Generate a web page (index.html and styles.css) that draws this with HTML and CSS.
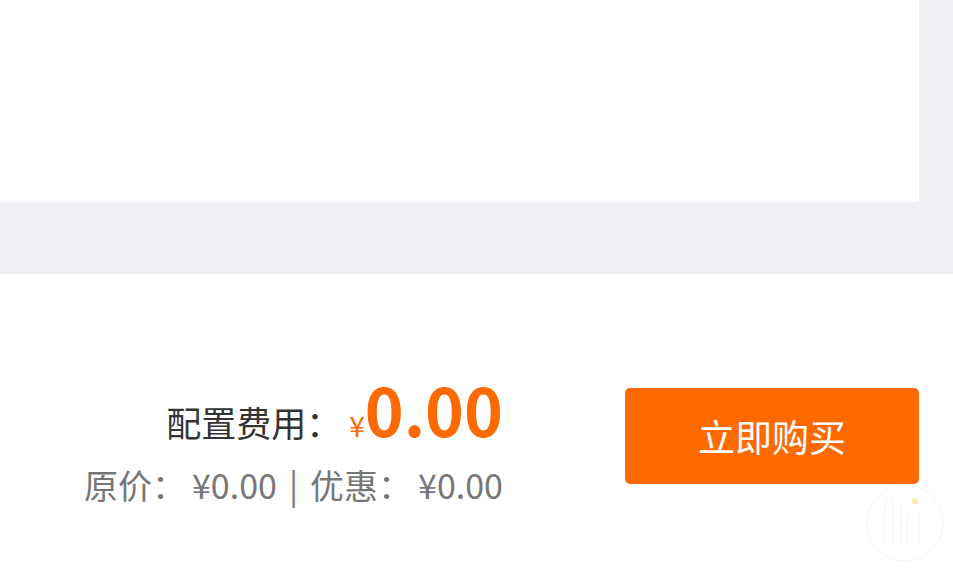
FILE: index.html
```html
<!DOCTYPE html>
<html lang="zh-CN">
<head>
    <meta charset="UTF-8">
    <meta name="viewport" content="width=device-width, initial-scale=1.0">
    <title>配置费用</title>
    <link rel="stylesheet" href="styles.css">
</head>
<body>

    <div class="top">
        <div class="panel"></div>
    </div>

    <div class="buy-bar">
        <div class="price">
            <div class="price-total">
                <span class="label">配置费用：</span><span class="yen">¥</span><span class="amount">0.00</span>
            </div>
            <div class="price-detail">
                原价：<span class="num">¥0.00</span><span class="sep">|</span>优惠：<span class="num">¥0.00</span>
            </div>
        </div>
        <button class="buy-btn">立即购买</button>

        <svg class="watermark" width="84" height="84" viewBox="0 0 84 84">
            <circle cx="42" cy="42" r="38" fill="none" stroke="#f7f7f7" stroke-width="1.2"/>
            <path d="M24 18 Q18 40 22 66 M30 18 L30 66" fill="none" stroke="#f7f7f7" stroke-width="1.2"/>
            <path d="M38 24 L38 64 M44 34 L44 64 M38 44 L50 44 M56 34 L56 62 L62 64" fill="none" stroke="#f7f7f7" stroke-width="1.2"/>
            <circle cx="52" cy="20" r="3.5" fill="#fdedbb"/>
        </svg>
    </div>

</body>
</html>
```

FILE: styles.css
```css
* {
    margin: 0;
    padding: 0;
    box-sizing: border-box;
}
html, body {
    height: 100%;
    font-family: "Noto Sans CJK SC", "Noto Sans", sans-serif;
    background: #fff;
}
body {
    display: flex;
    flex-direction: column;
    overflow: hidden;
}
.top {
    height: 274px;
    background-color: #eff0f4;
    padding-right: 34px;
}
.panel {
    height: 202px;
    background-color: #fff;
}
.buy-bar {
    position: relative;
    flex: 1;
    display: flex;
    justify-content: flex-end;
    align-items: flex-start;
    gap: 122px;
    padding: 114px 34px 0 0;
}
.price {
    text-align: right;
    margin-top: -15px;
}
.price-total {
    color: #333;
    font-size: 35px;
    line-height: 70px;
    white-space: nowrap;
}
.price-total .yen {
    color: #ff6a00;
    font-size: 28px;
    margin-left: 8px;
}
.price-total .amount {
    color: #ff6a00;
    font-size: 66px;
    font-weight: bold;
}
.price-detail {
    color: #777;
    font-size: 34px;
    line-height: 46px;
    margin-top: 2px;
    white-space: nowrap;
}
.price-detail .num {
    margin-left: 6px;
}
.price-detail .sep {
    margin: 0 12px;
}
.buy-btn {
    width: 294px;
    height: 96px;
    border: none;
    border-radius: 5px;
    background-color: #ff6a00;
    color: #fff;
    font-family: inherit;
    font-size: 37px;
    cursor: pointer;
}
.watermark {
    position: absolute;
    right: 6px;
    bottom: 7px;
}
```
